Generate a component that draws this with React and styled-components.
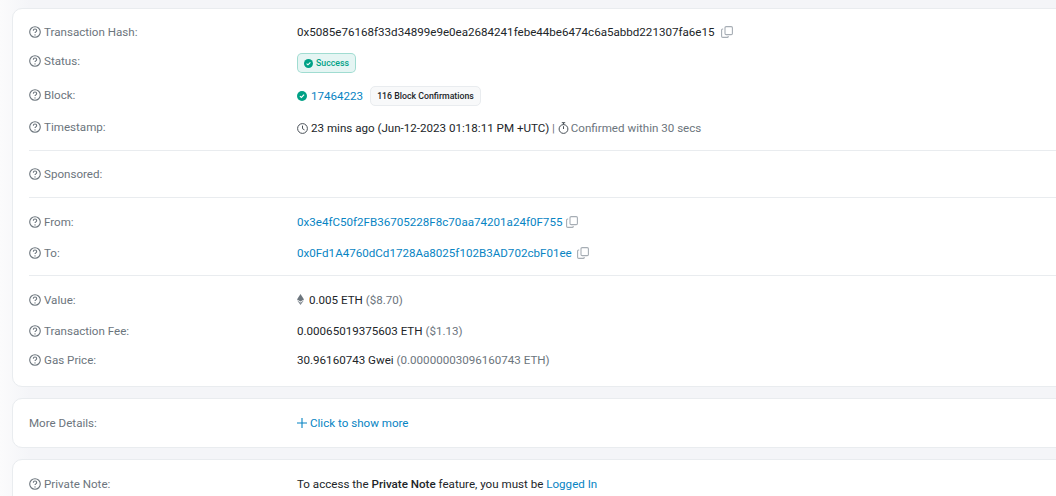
import React from 'react';
import styled, { createGlobalStyle } from 'styled-components';

const Global = createGlobalStyle`
  html, body { margin: 0; padding: 0; height: 496px; overflow: hidden; background: #f8f9fa; }
  body { font-family: Roboto, "Liberation Sans", sans-serif; font-size: 11.6px; color: #212529; }
`;
const Page = styled.div`
  display: flex; flex-direction: column; gap: 11px;
  padding: 8px 0 0 12px; width: 1100px; height: 496px; box-sizing: border-box; overflow: hidden;
  background: linear-gradient(90deg, #fbfbfc 0, #f4f5f8 30px);
`;
const Card = styled.section`
  background: #fff; border: 1px solid #e9ecef; border-radius: 10px;
  padding: ${p => p.$pad || '0 16px'}; flex: none;
`;
const Row = styled.div`
  display: grid; grid-template-columns: 268px 1fr; align-items: center;
  height: ${p => p.$h}px;
`;
const Label = styled.div`
  display: flex; align-items: center; gap: 3px; color: #6c757d; line-height: 16px;
  position: relative; top: ${p => p.$up ? -p.$up : 0}px;
`;
const Value = styled.div`
  display: flex; align-items: center; line-height: 16px; white-space: nowrap;
`;
const Muted = styled.span` color: #6c757d; `;
const Link = styled.a` color: #0784c3; text-decoration: none; `;
const Divider = styled.hr`
  border: 0; border-top: 1px solid #e9ecef; margin: ${p => p.$mt || 0}px 0 0;
`;
const Badge = styled.span`
  display: inline-flex; align-items: center; gap: 3px; height: 18px; padding: 0 6px;
  font-size: 8.75px; color: #00a186; background: rgba(0,161,134,.1);
  border: 1px solid rgba(0,161,134,.3); border-radius: 5px; font-weight: 500;
`;
const Gray = styled.span`
  display: inline-flex; align-items: center; height: 18px; padding: 0 6px; margin-left: 6px;
  font-size: 8.75px; font-weight: 500; color: #212529; background: #f8f9fa;
  border: 1px solid #e9ecef; border-radius: 5px;
`;
const Gap = styled.span` display: inline-block; width: ${p => p.$w}px; `;
const Bold = styled.b` font-weight: 500; white-space: pre; `;
const Ic = styled.svg` flex: none; display: block; `;

const Help = () => (
  <Ic width="12" height="12" viewBox="0 0 12 12" fill="none" stroke="#6c757d">
    <circle cx="6" cy="6" r="5.3" strokeWidth="1.1" />
    <path d="M4.3 4.7c0-2.2 3.4-2.2 3.4 0 0 1.2-1.7 1.2-1.7 2.4" strokeWidth="1.1" />
    <circle cx="6" cy="8.9" r=".7" fill="#6c757d" stroke="none" />
  </Ic>
);
const Copy = () => (
  <Ic width="12" height="12" viewBox="0 0 12 12" fill="none" stroke="#a6adb4" strokeWidth="1.1">
    <rect x="4" y="0.6" width="7.4" height="8" rx="1.2" />
    <path d="M2.2 3H1.6C1 3 .6 3.4 .6 4v6.2c0 .7.5 1.2 1.2 1.2h4.4c.6 0 1-.4 1-1v-.5" />
  </Ic>
);
const Check = ({ size }) => (
  <Ic width={size} height={size} viewBox="0 0 10 10">
    <circle cx="5" cy="5" r="5" fill="#00a186" />
    <path d="M2.9 5.1 4.4 6.5 7.1 3.7" fill="none" stroke="#fff" strokeWidth="1.2" />
  </Ic>
);
const Clock = () => (
  <Ic width="11" height="11" viewBox="0 0 11 11" fill="none" stroke="#495057">
    <circle cx="5.5" cy="5.5" r="4.9" />
    <path d="M5.5 2.6v3.1l2 1.2" />
  </Ic>
);
const Timer = () => (
  <Ic width="11" height="12" viewBox="0 0 11 12" fill="none" stroke="#495057">
    <circle cx="5.5" cy="7" r="4.4" />
    <path d="M3.8.7h3.4M5.5 .7v1.8M5.5 7V4.2" />
  </Ic>
);
const Eth = () => (
  <Ic width="7" height="11" viewBox="0 0 7 11">
    <path d="M3.5 0 7 5.5 3.5 7.6 0 5.5z" fill="#6c757d" />
    <path d="M0 6.3 3.5 8.4 7 6.3 3.5 11z" fill="#868e96" />
  </Ic>
);
const Plus = () => (
  <Ic width="10" height="10" viewBox="0 0 10 10" stroke="#0784c3" strokeWidth="1.1">
    <path d="M5 0v10M0 5h10" />
  </Ic>
);

const F = ({ up, children }) => (
  <Label $up={up}><Help /><span>{children}</span></Label>
);

export default function App() {
  return (
    <Page>
      <Global />
      <Card $pad="8px 16px 3px">
        <Row $h={30}>
          <F>Transaction Hash:</F>
          <Value>0x5085e76168f33d34899e9e0ea2684241febe44be6474c6a5abbd221307fa6e15<Gap $w={7} /><Copy /></Value>
        </Row>
        <Row $h={32}>
          <F up={2}>Status:</F>
          <Value><Badge><Check size={9} />Success</Badge></Value>
        </Row>
        <Row $h={33}>
          <F up={1}>Block:</F>
          <Value><Check size={10} /><Gap $w={4} /><Link>17464223</Link><Gap $w={1} /><Gray>116 Block Confirmations</Gray></Value>
        </Row>
        <Row $h={32}>
          <F up={1}>Timestamp:</F>
          <Value><Clock /><Gap $w={3} />23 mins ago (Jun-12-2023 01:18:11 PM +UTC)<Muted>&nbsp;|&nbsp;</Muted><Timer /><Gap $w={2} /><Muted>Confirmed within 30 secs</Muted></Value>
        </Row>
        <Divider $mt={6} />
        <Row $h={46}><F>Sponsored:</F><Value /></Row>
        <Divider />
        <Row $h={47}>
          <F>From:</F>
          <Value><Link>0x3e4fC50f2FB36705228F8c70aa74201a24f0F755</Link><Gap $w={4} /><Copy /></Value>
        </Row>
        <Row $h={16}>
          <F>To:</F>
          <Value><Link>0x0Fd1A4760dCd1728Aa8025f102B3AD702cbF01ee</Link><Gap $w={5} /><Copy /></Value>
        </Row>
        <Row $h={14} />
        <Divider />
        <Row $h={47}>
          <F>Value:</F>
          <Value><Eth /><Gap $w={5} />0.005 ETH&nbsp;<Muted>($8.70)</Muted></Value>
        </Row>
        <Row $h={13}>
          <F>Transaction Fee:</F>
          <Value>0.00065019375603 ETH&nbsp;<Muted>($1.13)</Muted></Value>
        </Row>
        <Row $h={47}>
          <F>Gas Price:</F>
          <Value>30.96160743 Gwei&nbsp;<Muted>(0.00000003096160743 ETH)</Muted></Value>
        </Row>
      </Card>
      <Card $pad="15px 16px">
        <Row $h={18}>
          <Label>More Details:</Label>
          <Value><Plus /><Gap $w={3} /><Link>Click to show more</Link></Value>
        </Row>
      </Card>
      <Card $pad="15px 16px">
        <Row $h={18}>
          <F>Private Note:</F>
          <Value>To access the&nbsp;<Bold>Private Note</Bold>&nbsp;feature, you must be&nbsp;<Link>Logged In</Link></Value>
        </Row>
      </Card>
    </Page>
  );
}
